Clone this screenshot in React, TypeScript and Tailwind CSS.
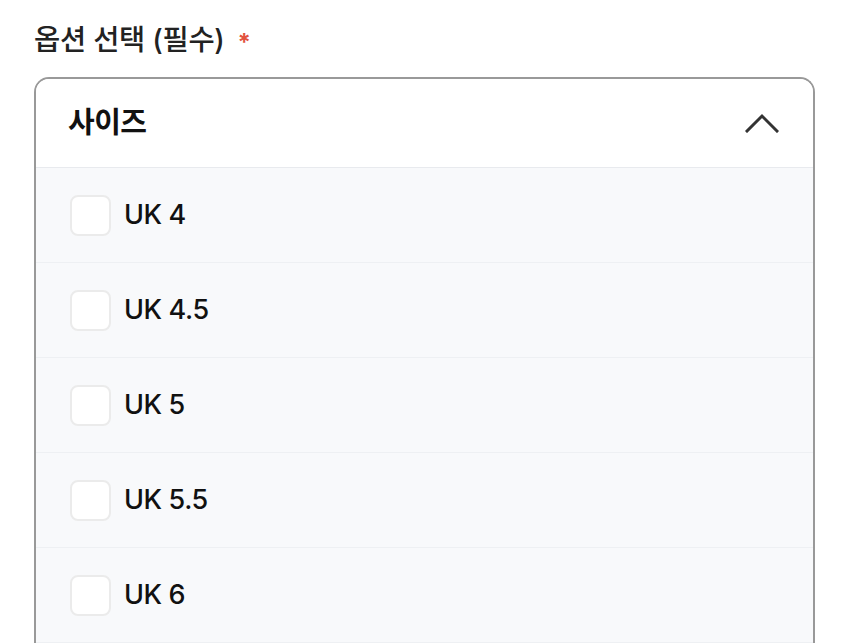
const sizes = ["UK 4", "UK 4.5", "UK 5", "UK 5.5", "UK 6"];

const font = { fontFamily: 'Inter, "Noto Sans CJK KR", sans-serif' };

function ChevronUp() {
  return (
    <svg width="34" height="20" viewBox="0 0 34 20" fill="none" aria-hidden="true">
      <path d="M2 18 L17 3 L32 18" stroke="#333" strokeWidth="3" strokeLinecap="square" />
    </svg>
  );
}

function SizeRow({ label }: { label: string }) {
  return (
    <label className="flex h-[95px] items-center border-b border-[#eef0f3] pl-[34px]">
      <span className="h-[41px] w-[41px] rounded-[8px] border-2 border-[#ebebeb] bg-white" />
      <span className="ml-[13px] text-[27px] font-medium tracking-[-0.4px] text-[#111]">{label}</span>
    </label>
  );
}

export default function App() {
  return (
    <div className="h-[644px] overflow-hidden bg-white pl-[34px] pt-[20px]" style={font}>
      <div className="flex h-[40px] items-center gap-[13px]">
        <span className="text-[28.5px] font-medium tracking-[-0.3px] text-[#222]">옵션 선택 (필수)</span>
        <span className="mt-[6px] text-[24px] font-bold leading-none text-[#e2533f]">*</span>
      </div>

      <div className="mt-[17px] w-[781px] overflow-hidden rounded-t-[15px] border-2 border-b-0 border-[#999]">
        <div className="flex h-[89px] items-center justify-between border-b border-[#e8eaee] bg-white pl-[32px] pr-[34px]">
          <span className="text-[29px] font-bold tracking-[-0.5px] text-[#111]">사이즈</span>
          <ChevronUp />
        </div>
        <div className="bg-[#f8f9fb]">
          {sizes.map((s) => (
            <SizeRow key={s} label={s} />
          ))}
        </div>
      </div>
    </div>
  );
}
